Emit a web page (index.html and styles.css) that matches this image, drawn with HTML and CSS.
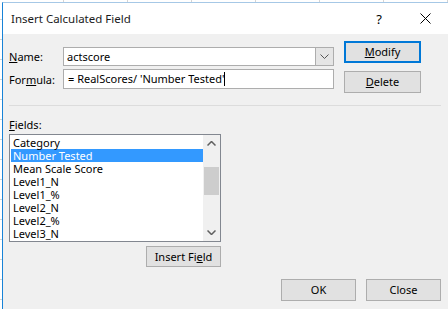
FILE: index.html
```html
<!DOCTYPE html>
<html lang="en">
<head>
    <meta charset="UTF-8">
    <meta name="viewport" content="width=device-width, initial-scale=1.0">
    <title>Insert Calculated Field</title>
    <link rel="stylesheet" href="styles.css">
</head>
<body>
    <div class="dialog">
        <div class="titlebar">
            <span class="title">Insert Calculated Field</span>
            <span class="help">?</span>
            <span class="close-x">
                <svg width="11" height="11" viewBox="0 0 11 11"><path d="M0.5 0.5 L10.5 10.5 M10.5 0.5 L0.5 10.5" stroke="#000" stroke-width="1" fill="none"/></svg>
            </span>
        </div>
        <div class="content">
            <div class="top">
                <div class="inputs">
                    <div class="row">
                        <label class="label"><u>N</u>ame:</label>
                        <div class="combo">
                            <span class="combo-text">actscore</span>
                            <span class="combo-btn">
                                <svg width="9" height="5" viewBox="0 0 9 5"><path d="M0.5 0.5 L4.5 4.5 L8.5 0.5" stroke="#555" stroke-width="1" fill="none"/></svg>
                            </span>
                        </div>
                    </div>
                    <div class="row">
                        <label class="label">For<u>m</u>ula:</label>
                        <div class="textbox">= RealScores/ 'Number Tested'<span class="caret"></span></div>
                    </div>
                </div>
                <div class="side-buttons">
                    <button class="btn default"><u>M</u>odify</button>
                    <button class="btn"><u>D</u>elete</button>
                </div>
            </div>
            <div class="separator"></div>
            <div class="fields">
                <div class="fields-label"><u>F</u>ields:</div>
                <div class="listbox">
                    <ul class="items">
                        <li>Category</li>
                        <li class="selected">Number Tested</li>
                        <li>Mean Scale Score</li>
                        <li>Level1_N</li>
                        <li>Level1_%</li>
                        <li>Level2_N</li>
                        <li>Level2_%</li>
                        <li>Level3_N</li>
                    </ul>
                    <div class="scrollbar">
                        <span class="arrow">
                            <svg width="9" height="5" viewBox="0 0 9 5"><path d="M0.5 4.5 L4.5 0.5 L8.5 4.5" stroke="#606060" stroke-width="1.5" fill="none"/></svg>
                        </span>
                        <span class="thumb"></span>
                        <span class="arrow down">
                            <svg width="9" height="5" viewBox="0 0 9 5"><path d="M0.5 0.5 L4.5 4.5 L8.5 0.5" stroke="#606060" stroke-width="1.5" fill="none"/></svg>
                        </span>
                    </div>
                </div>
                <div class="insert-row">
                    <button class="btn insert">Insert Fi<u>e</u>ld</button>
                </div>
            </div>
            <div class="footer">
                <button class="btn">OK</button>
                <button class="btn">Close</button>
            </div>
        </div>
    </div>
</body>
</html>
```

FILE: styles.css
```css
html, body {
    height: 100%;
}
body {
    margin: 0;
    overflow: hidden;
    font-family: "Noto Sans", "Open Sans", sans-serif;
    font-size: 11px;
    color: #000;
    background-color: #fff;
    background-image:
        repeating-linear-gradient(90deg, transparent 0 63px, #d4d4d4 63px 64px),
        repeating-linear-gradient(180deg, transparent 0 19px, #d4d4d4 19px 20px);
}
.dialog {
    margin: 2px 0 0 2px;
    height: calc(100% - 2px);
    border-left: 1px solid #1883d7;
    border-top: 1px solid #a6c8e6;
    background-color: #f0f0f0;
    box-sizing: border-box;
}
.titlebar {
    height: 31px;
    background-color: #fff;
    display: flex;
    align-items: center;
    padding-left: 8px;
}
.title {
    flex: 1;
    font-size: 11.5px;
    color: #1b1b1b;
}
.help {
    width: 46px;
    text-align: center;
    font-size: 13px;
}
.close-x {
    width: 46px;
    display: flex;
    justify-content: center;
}
.content {
    padding: 7px 7px 0 6px;
}
.top {
    display: flex;
}
.inputs {
    padding-top: 6px;
    display: flex;
    flex-direction: column;
    gap: 3px;
}
.row {
    display: flex;
    align-items: center;
}
.label {
    width: 54px;
}
.combo {
    width: 271px;
    height: 19px;
    box-sizing: border-box;
    border: 1px solid #adadad;
    background-color: #fff;
    display: flex;
}
.combo-text {
    flex: 1;
    padding-left: 3px;
    line-height: 17px;
}
.combo-btn {
    width: 17px;
    background-color: #e5e5e5;
    border-left: 1px solid #adadad;
    display: flex;
    align-items: center;
    justify-content: center;
}
.textbox {
    width: 271px;
    height: 20px;
    box-sizing: border-box;
    border: 1px solid #adadad;
    background-color: #fff;
    padding-left: 4px;
    line-height: 18px;
    display: flex;
    align-items: center;
}
.caret {
    width: 1px;
    height: 14px;
    background-color: #000;
}
.side-buttons {
    margin-left: 10px;
    display: flex;
    flex-direction: column;
    gap: 8px;
}
.btn {
    font-family: inherit;
    font-size: 11px;
    color: #000;
    background-color: #e1e1e1;
    border: 1px solid #adadad;
    width: 75px;
    height: 22px;
    padding: 0;
    line-height: 18px;
}
.side-buttons .btn {
    width: 77px;
}
.btn.default {
    border: 2px solid #0078d7;
}
.separator {
    margin-top: 12px;
    height: 1px;
    background-color: #dcdcdc;
}
.fields {
    width: 212px;
}
.fields-label {
    margin-top: 11px;
    line-height: 16px;
    margin-bottom: 1px;
}
.listbox {
    height: 108px;
    box-sizing: border-box;
    border: 1px solid #828790;
    background-color: #fff;
    display: flex;
}
.items {
    list-style: none;
    margin: 0;
    padding: 1px 0 0 1px;
    flex: 1;
}
.items li {
    height: 13px;
    line-height: 13px;
    padding-left: 2px;
    white-space: nowrap;
}
.items li.selected {
    background-color: #3399ff;
    color: #fff;
}
.scrollbar {
    width: 17px;
    background-color: #f0f0f0;
    display: flex;
    flex-direction: column;
    align-items: center;
}
.arrow {
    height: 17px;
    width: 17px;
    display: flex;
    align-items: center;
    justify-content: center;
}
.arrow.down {
    margin-top: auto;
}
.thumb {
    width: 15px;
    height: 28px;
    margin-top: 15px;
    background-color: #cdcdcd;
}
.insert-row {
    margin-top: 4px;
    display: flex;
    justify-content: flex-end;
}
.insert {
    height: 21px;
}
.footer {
    margin-top: 12px;
    display: flex;
    justify-content: flex-end;
    gap: 10px;
}
```
